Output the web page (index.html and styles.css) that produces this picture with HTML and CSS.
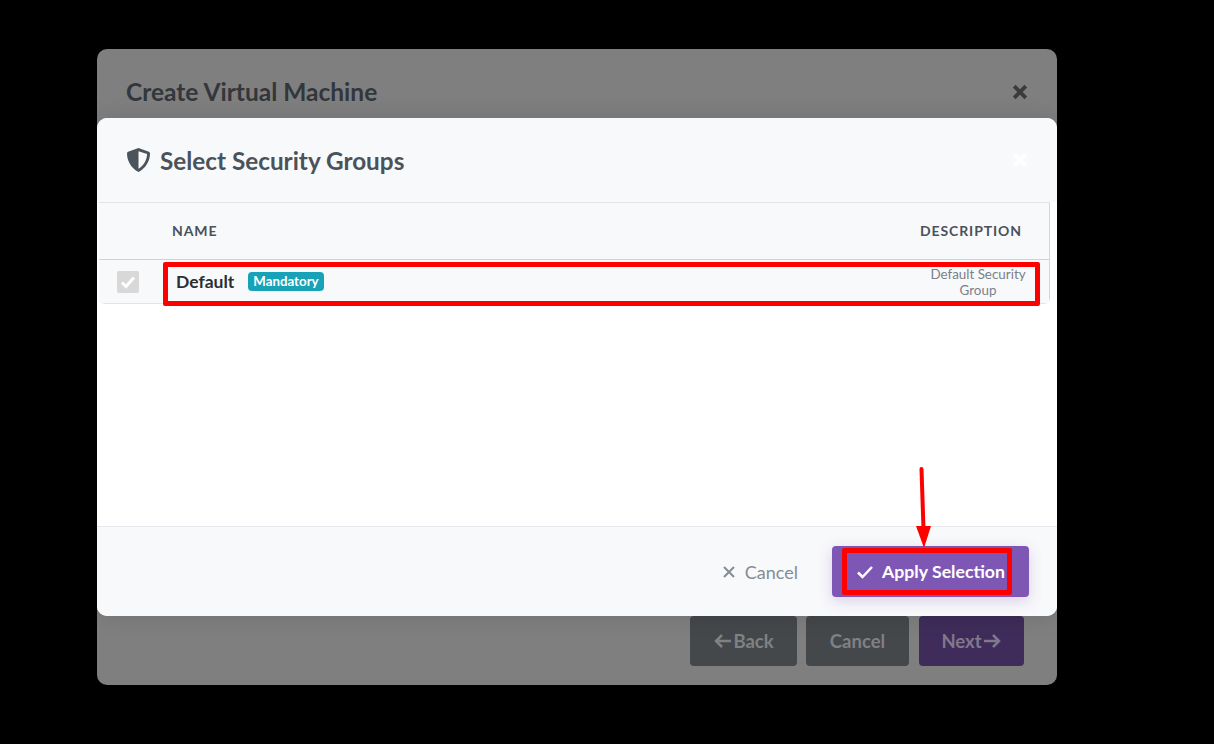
FILE: index.html
```html
<!DOCTYPE html>
<html lang="en">

<head>
    <meta charset="UTF-8">
    <meta name="viewport" content="width=device-width, initial-scale=1.0">
    <title>Select Security Groups</title>
    <link rel="stylesheet" href="styles.css">
</head>

<body>
    <div class="wizard">
        <div class="wizardHead">
            <h2 class="wizardTitle">Create Virtual Machine</h2>
            <svg class="closeIcon" viewBox="0 0 14 14"><path d="M2.500 2.500l9 9M11.500 2.500l-9 9" /></svg>
        </div>
        <div class="wizardFoot">
            <button type="button" class="darkBtn backBtn">
                <svg class="arrowIcon" viewBox="0 0 20 16"><path d="M18 8H3M9 2L3 8l6 6" /></svg>Back
            </button>
            <button type="button" class="darkBtn cancelBtn">Cancel</button>
            <button type="button" class="darkBtn nextBtn">Next
                <svg class="arrowIcon" viewBox="0 0 20 16"><path d="M2 8h15M11 2l6 6-6 6" /></svg>
            </button>
        </div>

        <div class="dialog">
            <div class="dialogHead">
                <svg class="shieldIcon" viewBox="1 0 22 26" preserveAspectRatio="none">
                    <path fill-rule="evenodd" d="M12 0L22 4Q23 4.500 23 6C23 14 19 22 12 26C5 22 1 14 1 6Q1 4.500 2 4ZM12 3.400V22.500C17 19 20 13 20.200 6.500Z" />
                </svg>
                <h2 class="dialogTitle">Select Security Groups</h2>
                <svg class="closeIcon faint" viewBox="0 0 14 14"><path d="M2.500 2.500l9 9M11.500 2.500l-9 9" /></svg>
            </div>
            <div class="dialogBody">
                <div class="groupTable">
                    <div class="tableHead">
                        <span class="colName">NAME</span>
                        <span class="colDesc">DESCRIPTION</span>
                    </div>
                    <div class="tableRow">
                        <span class="checkBox">
                            <svg viewBox="0 0 22 22"><path d="M5 11.500l4 4 8-9" /></svg>
                        </span>
                        <span class="rowName">Default</span>
                        <span class="badge">Mandatory</span>
                        <span class="rowDesc">Default Security Group</span>
                    </div>
                </div>
            </div>
            <div class="dialogFoot">
                <button type="button" class="linkBtn">
                    <svg viewBox="0 0 14 14"><path d="M2 2l10 10M12 2L2 12" /></svg>Cancel
                </button>
                <button type="button" class="applyBtn">
                    <svg viewBox="0 0 18 14"><path d="M2 7.500l4.500 4.500L16 2" /></svg>Apply Selection
                </button>
            </div>
        </div>

        <!-- red markup drawn on top of the screenshot -->
        <div class="mark markRow"></div>
        <div class="mark markBtn"></div>
        <svg class="markArrow" viewBox="0 0 24 84">
            <path d="M11.500 3l2 60" />
            <polygon points="6,60 21,60 14,82" />
        </svg>
    </div>
</body>

</html>
```

FILE: styles.css
```css
* {
    margin: 0;
    padding: 0;
    box-sizing: border-box;
}

body {
    height: 744px;
    overflow: hidden;
    background-color: #000;
    font-family: "Lato", "Liberation Sans", sans-serif;
}

button {
    border: none;
    font-family: inherit;
}

.wizard {
    position: relative;
    display: flex;
    flex-direction: column;
    justify-content: space-between;
    margin: 49px 0 0 97px;
    width: 960px;
    height: 636px;
    border-radius: 10px;
    background-color: #7f7f7f;
}

.wizardHead {
    display: flex;
    justify-content: space-between;
    align-items: center;
    padding: 26px 28px 0 29px;
}

.wizardTitle {
    font-size: 24.500px;
    line-height: 33px;
    font-weight: 700;
    color: #33373b;
}

.closeIcon {
    width: 18px;
    height: 18px;
    fill: none;
    stroke: #3b3b3b;
    stroke-width: 3;
}

.closeIcon.faint {
    stroke: #fff;
}

.wizardFoot {
    display: flex;
    justify-content: flex-end;
    gap: 10px;
    padding: 0 33px 19px 0;
}

.darkBtn {
    display: flex;
    justify-content: center;
    align-items: center;
    gap: 0;
    width: 107px;
    height: 50px;
    border-radius: 4px;
    background-color: #45484b;
    color: #7f8183;
    font-size: 18.500px;
    font-weight: 700;
}

.backBtn {
    margin-right: -1px;
}

.cancelBtn {
    width: 103px;
}

.nextBtn {
    width: 105px;
    background-color: #3f2c5a;
    color: #80788c;
}

.arrowIcon {
    width: 20px;
    height: 16px;
    fill: none;
    stroke: currentColor;
    stroke-width: 2.500;
}

.dialog {
    position: absolute;
    top: 69px;
    left: 0;
    display: flex;
    flex-direction: column;
    width: 960px;
    height: 498px;
    border-radius: 10px;
    background-color: #fff;
    box-shadow: 0 0 24px rgba(0, 0, 0, 0.12);
    overflow: hidden;
}

.dialogHead {
    display: flex;
    align-items: center;
    height: 84px;
    padding: 0 28px 0 30px;
    background-color: #f8f9fb;
}

.shieldIcon {
    width: 23px;
    height: 24px;
    margin-right: 10px;
    fill: #4b535b;
}

.dialogTitle {
    flex: 1;
    font-size: 24.300px;
    line-height: 33px;
    font-weight: 700;
    color: #4b525a;
}

.dialogBody {
    flex: 1;
    padding: 0 7px 0 2px;
}

.groupTable {
    border: 1px solid #e3e3ea;
    border-left: none;
    border-right-color: #d5d6da;
    border-radius: 0 0 6px 6px;
}

.tableHead {
    display: flex;
    justify-content: space-between;
    align-items: center;
    height: 57px;
    padding: 0 27px 1px 73px;
    background-color: #f8f9fb;
    border-bottom: 1px solid #cfd1d4;
    font-size: 14px;
    font-weight: 700;
    letter-spacing: 0.900px;
    color: #4b525a;
}

.tableRow {
    display: flex;
    align-items: center;
    height: 43px;
    background-color: #f8f9fb;
}

.checkBox {
    display: flex;
    width: 22px;
    height: 22px;
    margin: 0 37px 0 18px;
    border-radius: 2px;
    background-color: #d8d8d8;
}

.checkBox svg {
    fill: none;
    stroke: #fff;
    stroke-width: 3;
}

.rowName {
    font-size: 17.500px;
    font-weight: 700;
    color: #2b2e32;
}

.badge {
    margin-left: 14px;
    padding: 0 5px;
    height: 19px;
    line-height: 19px;
    border-radius: 4px;
    background-color: #17a2b8;
    color: #fff;
    font-size: 13.300px;
    font-weight: 700;
}

.rowDesc {
    margin-left: auto;
    width: 110px;
    margin-right: 16px;
    text-align: center;
    font-size: 13.400px;
    line-height: 16px;
    color: #7a8088;
}

.dialogFoot {
    display: flex;
    justify-content: flex-end;
    align-items: center;
    gap: 34px;
    height: 90px;
    padding: 0 28px 0 0;
    background-color: #f8f9fb;
    border-top: 1px solid #e6e7ec;
}

.linkBtn {
    display: flex;
    align-items: center;
    gap: 9px;
    background: none;
    color: #858c94;
    font-size: 18px;
}

.linkBtn svg {
    width: 14px;
    height: 14px;
    fill: none;
    stroke: currentColor;
    stroke-width: 2;
}

.applyBtn {
    display: flex;
    justify-content: center;
    align-items: center;
    gap: 8px;
    width: 197px;
    height: 51px;
    border-radius: 4px;
    background-color: #7e57b5;
    box-shadow: 0 4px 14px rgba(126, 87, 181, 0.25);
    color: #fff;
    font-size: 17.700px;
    font-weight: 700;
}

.applyBtn svg {
    width: 18px;
    height: 14px;
    fill: none;
    stroke: #fff;
    stroke-width: 2.500;
}

.mark {
    position: absolute;
    border: 5px solid #f00;
}

.markRow {
    top: 213px;
    left: 66px;
    width: 877px;
    height: 44px;
    border-radius: 2px;
}

.markBtn {
    top: 499px;
    left: 745px;
    width: 170px;
    height: 47px;
    border-radius: 2px;
}

.markArrow {
    position: absolute;
    top: 417px;
    left: 813px;
    width: 24px;
    height: 84px;
    fill: #f00;
}

.markArrow path {
    fill: none;
    stroke: #f00;
    stroke-width: 4;
    stroke-linecap: round;
}
```
